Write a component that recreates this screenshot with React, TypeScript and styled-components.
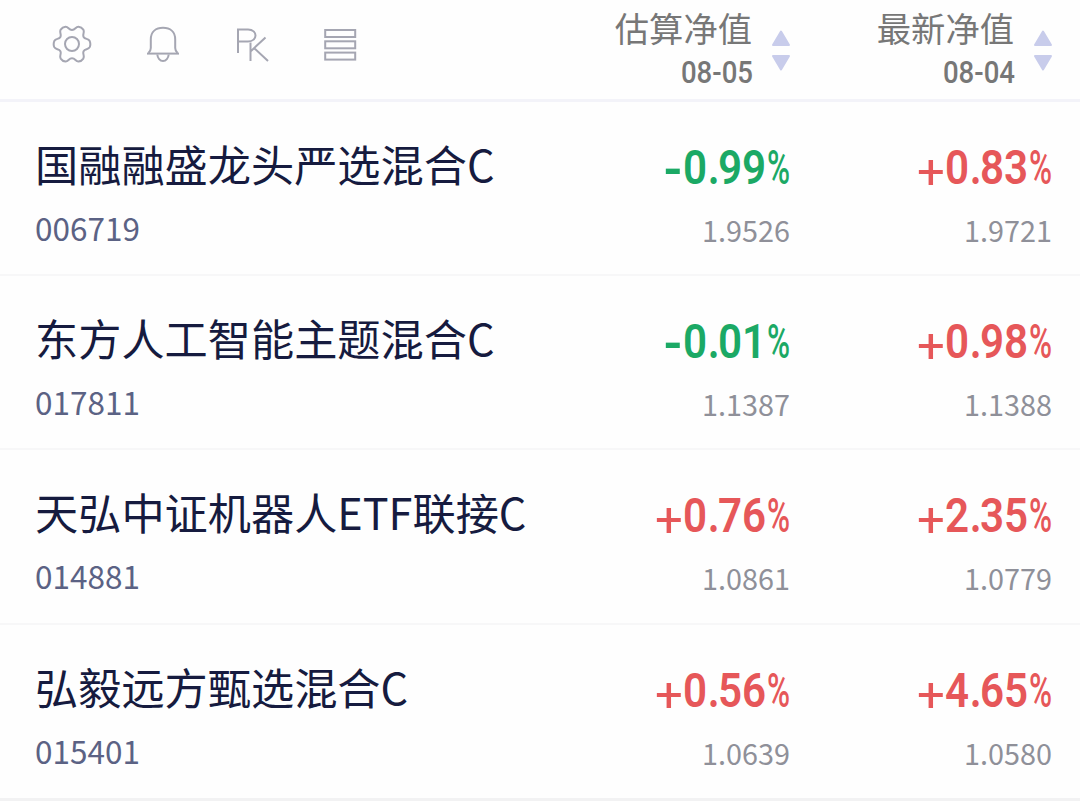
import React from "react";
import styled, { createGlobalStyle } from "styled-components";

const GlobalStyle = createGlobalStyle`
  * {
    box-sizing: border-box;
  }
  body {
    margin: 0;
    overflow: hidden;
    background-color: #fefefe;
    font-family: "Noto Sans CJK SC", "Noto Sans", sans-serif;
  }
`;

const PageWrapper = styled.div`
  width: 1080px;
  height: 801px;
  overflow: hidden;
`;

const Header = styled.header`
  display: flex;
  justify-content: space-between;
  height: 102px;
  padding-right: 27px;
  border-bottom: 3px solid #f3f3f9;
`;

const Toolbar = styled.div`
  display: flex;
  align-items: center;
  height: 88px;
  padding-left: 51px;
  gap: 50px;
`;

const ToolIcon = styled.svg`
  display: block;
  width: 41px;
  height: 42px;
  fill: none;
  stroke: #a5a6b2;
  stroke-width: 2;
`;

const SortGroup = styled.div`
  display: flex;
  gap: 84px;
`;

const SortColumn = styled.div`
  display: flex;
  width: 178px;
  justify-content: flex-end;
`;

const SortLabel = styled.div`
  display: flex;
  flex-direction: column;
  align-items: flex-end;
  flex-shrink: 0;
  padding-top: 2px;
  color: #777;
  white-space: nowrap;
`;

const SortTitle = styled.span`
  height: 52px;
  font-size: 34.3px;
  line-height: 50px;
`;

const SortDate = styled.span`
  height: 38px;
  margin-right: -1px;
  font-family: Roboto, sans-serif;
  font-size: 31px;
  font-weight: 500;
  line-height: 38px;
  transform: scaleX(0.89);
  transform-origin: right;
`;

const SortArrows = styled.svg`
  flex-shrink: 0;
  width: 20px;
  height: 44px;
  margin: 28px 0 0 19px;
  fill: #c8cceb;
  stroke: #c8cceb;
  stroke-width: 2;
  stroke-linejoin: round;
`;

const FundRow = styled.div`
  display: flex;
  justify-content: space-between;
  height: 174.2px;
  padding: 29px 28px 0 35px;
  border-bottom: 2px solid #f7f7f8;

  &:last-child {
    border-bottom: 3px solid #f2f2f3;
    height: 176px;
  }
`;

const FundName = styled.div`
  height: 65px;
  color: #161b3f;
  font-size: 43.2px;
  line-height: 65px;
`;

const FundCode = styled.div`
  height: 62px;
  color: #5b6284;
  font-size: 31.5px;
  line-height: 62px;
`;

const Values = styled.div`
  display: flex;
  gap: 84px;
`;

const ValueCell = styled.div`
  display: flex;
  flex-direction: column;
  align-items: flex-end;
  width: 178px;
`;

const Change = styled.div<{ $up: boolean }>`
  display: flex;
  height: 68px;
  padding-top: 4px;
  color: ${({ $up }) => ($up ? "#e65759" : "#1ba965")};
  font-family: Roboto, sans-serif;
  font-size: 49px;
  line-height: 66px;
  white-space: nowrap;
`;

const Part = styled.span<{
  $width: number;
  $scale: number;
  $weight: number;
  $drop?: number;
}>`
  width: ${({ $width }) => $width}px;
  padding-top: ${({ $drop = 0 }) => $drop}px;
  font-weight: ${({ $weight }) => $weight};
  transform: scaleX(${({ $scale }) => $scale});
  transform-origin: left;
`;

const NetValue = styled.div`
  height: 62px;
  color: #8f9099;
  font-size: 28.8px;
  line-height: 62px;
`;

interface Quote {
  change: string;
  value: string;
}

interface Fund {
  name: string;
  code: string;
  estimate: Quote;
  latest: Quote;
}

const funds: Fund[] = [
  {
    name: "国融融盛龙头严选混合C",
    code: "006719",
    estimate: { change: "-0.99", value: "1.9526" },
    latest: { change: "+0.83", value: "1.9721" },
  },
  {
    name: "东方人工智能主题混合C",
    code: "017811",
    estimate: { change: "-0.01", value: "1.1387" },
    latest: { change: "+0.98", value: "1.1388" },
  },
  {
    name: "天弘中证机器人ETF联接C",
    code: "014881",
    estimate: { change: "+0.76", value: "1.0861" },
    latest: { change: "+2.35", value: "1.0779" },
  },
  {
    name: "弘毅远方甄选混合C",
    code: "015401",
    estimate: { change: "+0.56", value: "1.0639" },
    latest: { change: "+4.65", value: "1.0580" },
  },
];

const SortHeader: React.FC<{ title: string; date: string }> = ({
  title,
  date,
}) => (
  <SortColumn>
    <SortLabel>
      <SortTitle>{title}</SortTitle>
      <SortDate>{date}</SortDate>
    </SortLabel>
    <SortArrows viewBox="0 0 20 44">
      <path d="M10 3.5 L18 17 H2 Z" />
      <path d="M10 41.5 L18 28 H2 Z" />
    </SortArrows>
  </SortColumn>
);

const QuoteCell: React.FC<Quote> = ({ change, value }) => {
  const up = change[0] === "+";
  return (
    <ValueCell>
      <Change $up={up}>
        <Part
          $width={up ? 28 : 20}
          $scale={up ? 1 : 1.03}
          $weight={up ? 400 : 700}
          $drop={up ? 4 : 2}
        >
          {change[0]}
        </Part>
        <Part $width={25} $scale={0.86} $weight={600}>
          {change[1]}
        </Part>
        <Part $width={10} $scale={0.8} $weight={700}>
          .
        </Part>
        <Part $width={49} $scale={0.86} $weight={600}>
          {change.slice(3)}
        </Part>
        <Part $width={23} $scale={0.64} $weight={500}>
          %
        </Part>
      </Change>
      <NetValue>{value}</NetValue>
    </ValueCell>
  );
};

const App: React.FC = () => (
  <PageWrapper>
    <GlobalStyle />
    <Header>
      <Toolbar>
        <ToolIcon viewBox="0 0 41 42">
          <path d="M14.5 3.7 C17.5 3.5 17.5 7 21 7 C24.5 7 24.5 3.5 27.5 3.7 C29 3.9 31.4 5.3 32.3 6.6 C33.9 9.3 31.3 11.6 32.6 14 C34 16.6 37.4 15.2 38.7 18 C39.5 20 39.5 22.3 38.7 24.2 C37.4 27 34 25.5 32.6 28.2 C31.3 30.6 33.9 32.9 32.3 35.6 C31.4 37 29 38.3 27.5 38.5 C24.5 38.7 24.5 35.2 21 35.2 C17.5 35.2 17.5 38.7 14.5 38.5 C13 38.3 10.6 37 9.7 35.6 C8.1 32.9 10.7 30.6 9.4 28.2 C8 25.5 4.6 27 3.3 24.2 C2.5 22.3 2.5 20 3.3 18 C4.6 15.2 8 16.6 9.4 14 C10.7 11.6 8.1 9.3 9.7 6.6 C10.6 5.3 13 3.9 14.5 3.7 Z" />
          <circle cx="21" cy="21" r="7" />
        </ToolIcon>
        <ToolIcon viewBox="0 0 41 42">
          <path d="M5 30.6 H37" />
          <path d="M6.5 30 C8 28.5 8.8 27 8.8 25 V16.5 C8.8 8.5 14 4.8 21 4.8 C28 4.8 33.2 8.5 33.2 16.5 V25 C33.2 27 34 28.5 35.5 30" />
          <path d="M15.3 31.5 C15.6 35 18 38 21 38 C24 38 26.4 35 26.7 31.5" />
        </ToolIcon>
        <ToolIcon viewBox="0 0 41 42">
          <path d="M5 30 V6.5 H15 C25 6.5 25 18.5 15 18.5 H5" />
          <path d="M17.5 19.5 V38 M32.5 14.5 L17.5 28.5 M21 25 L35 38" />
        </ToolIcon>
        <ToolIcon viewBox="0 0 41 42">
          <rect x="1.2" y="7" width="30" height="7" />
          <rect x="1.2" y="18.3" width="30" height="7" />
          <rect x="1.2" y="29.6" width="30" height="7" />
        </ToolIcon>
      </Toolbar>
      <SortGroup>
        <SortHeader title="估算净值" date="08-05" />
        <SortHeader title="最新净值" date="08-04" />
      </SortGroup>
    </Header>
    <main>
      {funds.map((fund) => (
        <FundRow key={fund.code}>
          <div>
            <FundName>{fund.name}</FundName>
            <FundCode>{fund.code}</FundCode>
          </div>
          <Values>
            <QuoteCell {...fund.estimate} />
            <QuoteCell {...fund.latest} />
          </Values>
        </FundRow>
      ))}
    </main>
  </PageWrapper>
);

export default App;
